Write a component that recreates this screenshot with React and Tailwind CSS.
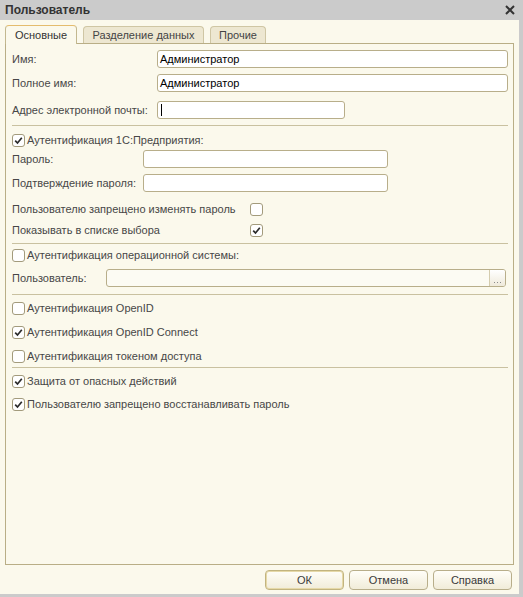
import React from 'react'

const font = { fontFamily: '"Liberation Sans", Arial, sans-serif' }

function CheckBox({ checked }) {
    return (
        <span className="w-[13px] h-[13px] shrink-0 rounded-[3px] border border-[#a39b7c] bg-white flex items-center justify-center">
            {checked && (
                <svg width="9" height="9" viewBox="0 0 9 9">
                    <path d="M1.2 4.6 L3.5 7 L7.8 1.8" fill="none" stroke="#2b2b2b" strokeWidth="1.7" />
                </svg>
            )}
        </span>
    )
}

function CheckRow({ checked, label, className = '' }) {
    return (
        <div className={`flex items-center h-[13px] ${className}`}>
            <CheckBox checked={checked} />
            <span className="ml-[2px] text-[11px] leading-none whitespace-nowrap text-[#474747]">{label}</span>
        </div>
    )
}

function Field({ label, inputLeft, width, value, cursor, className = '' }) {
    return (
        <div className={`flex items-center h-[18px] ${className}`}>
            <span className="shrink-0 text-[11px] leading-none whitespace-nowrap text-[#474747]" style={{ width: inputLeft }}>{label}</span>
            <div className="h-[18px] rounded-[3px] border border-[#b8ae8a] bg-white flex items-center pl-[2px] text-[11px] text-black" style={{ width }}>
                {value}
                {cursor && <span className="w-px h-[12px] bg-black ml-[1px]" />}
            </div>
        </div>
    )
}

function Separator({ className = '' }) {
    return <div className={`h-px w-[496px] bg-[#c9c1a0] ${className}`} />
}

function Tab({ label, active, className = '' }) {
    if (active) {
        return (
            <div className={`h-[19px] w-[72px] flex items-center justify-center rounded-t-[4px] border border-b-0 border-[#c3b88f] border-t-[#e4bc6e] bg-[#fbf9ec] text-[11px] text-[#333] -mb-px relative z-10 ${className}`}>
                {label}
            </div>
        )
    }
    return (
        <div className={`h-[17px] mt-[1px] flex items-center justify-center rounded-t-[4px] border border-b-0 border-[#cfc6a4] bg-[#ede7d1] text-[11px] text-[#444] ${className}`}>
            {label}
        </div>
    )
}

function Button({ label, primary }) {
    return (
        <div className={`w-[79px] h-[20px] rounded-[4px] border flex items-center justify-center text-[11px] text-[#3a3a3a] bg-gradient-to-b from-[#fffef8] to-[#f1ecd9] ${primary ? 'border-[#c2b47f] shadow-[inset_0_0_0_1px_#e6d9a8]' : 'border-[#b8ae8a]'}`}>
            {label}
        </div>
    )
}

export default function App() {
    return (
        <div className="w-[523px] h-[597px] bg-[#cbcbcb] flex flex-col select-none" style={font}>
            {/* Заголовок окна */}
            <div className="h-[20px] shrink-0 flex items-center justify-between pl-[5px] pr-[8px]">
                <span className="text-[12px] font-bold text-[#333]">Пользователь</span>
                <svg width="10" height="10" viewBox="0 0 10 10">
                    <path d="M1 1 L9 9 M9 1 L1 9" stroke="#333" strokeWidth="2" />
                </svg>
            </div>

            <div className="flex-1 mr-[4px] mb-[3px] bg-[#fbf9ec] flex flex-col px-[5px] pt-[5px]">
                {/* Вкладки */}
                <div className="flex items-start h-[18px]">
                    <Tab label="Основные" active />
                    <Tab label="Разделение данных" className="ml-[6px] w-[121px]" />
                    <Tab label="Прочие" className="ml-[6px] w-[56px]" />
                </div>

                {/* Панель */}
                <div className="flex-1 border border-[#b9ae86] pl-[6px] pt-[6px] flex flex-col">
                    <Field label="Имя:" inputLeft={145} width={351} value="Администратор" />
                    <Field label="Полное имя:" inputLeft={145} width={351} value="Администратор" className="mt-[6px]" />
                    <Field label="Адрес электронной почты:" inputLeft={145} width={188} cursor className="mt-[9px]" />

                    <Separator className="mt-[6px]" />
                    <CheckRow checked label="Аутентификация 1С:Предприятия:" className="mt-[8px]" />
                    <Field label="Пароль:" inputLeft={131} width={245} className="mt-[3px]" />
                    <Field label="Подтверждение пароля:" inputLeft={131} width={245} className="mt-[6px]" />

                    <div className="flex items-center h-[13px] mt-[11px]">
                        <span className="w-[238px] shrink-0 text-[11px] leading-none whitespace-nowrap text-[#474747]">Пользователю запрещено изменять пароль</span>
                        <CheckBox />
                    </div>
                    <div className="flex items-center h-[13px] mt-[8px]">
                        <span className="w-[238px] shrink-0 text-[11px] leading-none whitespace-nowrap text-[#474747]">Показывать в списке выбора</span>
                        <CheckBox checked />
                    </div>

                    <Separator className="mt-[6px]" />
                    <CheckRow label="Аутентификация операционной системы:" className="mt-[5px]" />
                    <div className="flex items-center h-[18px] mt-[7px]">
                        <span className="w-[94px] shrink-0 text-[11px] leading-none whitespace-nowrap text-[#474747]">Пользователь:</span>
                        <div className="w-[400px] h-[18px] rounded-[3px] border border-[#b8ae8a] bg-[#fcfbf3] flex justify-end overflow-hidden">
                            <div className="w-[16px] h-full border-l border-[#d4ccae] bg-gradient-to-b from-white to-[#efeadb] flex items-end justify-center pb-[3px] gap-[2px]">
                                <span className="w-px h-px bg-[#8a8a8a]" />
                                <span className="w-px h-px bg-[#8a8a8a]" />
                                <span className="w-px h-px bg-[#8a8a8a]" />
                            </div>
                        </div>
                    </div>

                    <Separator className="mt-[7px]" />
                    <CheckRow label="Аутентификация OpenID" className="mt-[7px]" />
                    <CheckRow checked label="Аутентификация OpenID Connect" className="mt-[11px]" />
                    <CheckRow label="Аутентификация токеном доступа" className="mt-[11px]" />

                    <Separator className="mt-[4px]" />
                    <CheckRow checked label="Защита от опасных действий" className="mt-[7px]" />
                    <CheckRow checked label="Пользователю запрещено восстанавливать пароль" className="mt-[10px]" />
                </div>

                {/* Кнопки */}
                <div className="h-[29px] shrink-0 flex items-start justify-end gap-[5px] pt-[5px] pr-[2px]">
                    <Button label="ОК" primary />
                    <Button label="Отмена" />
                    <Button label="Справка" />
                </div>
            </div>
        </div>
    )
}
